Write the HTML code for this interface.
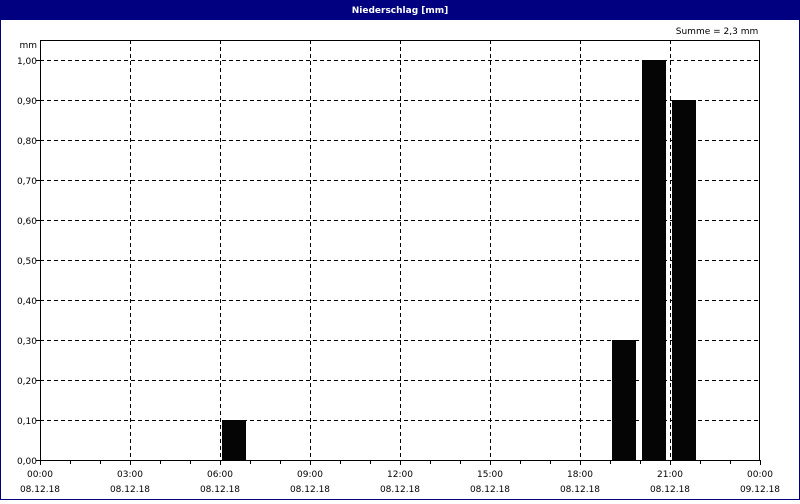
<!DOCTYPE html>
<html><head><style>
body{margin:0;width:800px;height:500px;overflow:hidden;background:#fff;font-family:"DejaVu Sans","Liberation Sans",sans-serif}
</style></head><body>
<svg width="800" height="500" xmlns="http://www.w3.org/2000/svg" font-family="DejaVu Sans, Liberation Sans, sans-serif" font-size="9">
<rect x="0" y="0" width="800" height="500" fill="#fff"/>
<rect x="0.5" y="0.5" width="799" height="499" fill="none" stroke="#000080"/>
<rect x="0" y="0" width="800" height="20" fill="#000080"/>
<text x="400" y="13" fill="#fff" font-weight="bold" text-anchor="middle">Niederschlag [mm]</text>
<text x="717" y="34" text-anchor="middle">Summe = 2,3 mm</text>
<text x="37" y="48" text-anchor="end">mm</text>
<g stroke="#000" stroke-dasharray="4,3" stroke-width="1">
<path d="M40 60.5H760M40 100.5H760M40 140.5H760M40 180.5H760M40 220.5H760M40 260.5H760M40 300.5H760M40 340.5H760M40 380.5H760M40 420.5H760"/>
<path d="M130.5 40V460M220.5 40V460M310.5 40V460M400.5 40V460M490.5 40V460M580.5 40V460M670.5 40V460"/>
</g>
<g fill="#050505">
<rect x="222" y="420" width="24" height="40"/>
<rect x="612" y="340" width="24" height="120"/>
<rect x="642" y="60" width="24" height="400"/>
<rect x="672" y="100" width="24" height="360"/>
</g>
<rect x="40.5" y="40.5" width="719" height="420" fill="none" stroke="#000"/>
<g stroke="#000">
<path d="M40.5 460V465M70.5 460V464M100.5 460V464M130.5 460V465M160.5 460V464M190.5 460V464M220.5 460V465M250.5 460V464M280.5 460V464M310.5 460V465M340.5 460V464M370.5 460V464M400.5 460V465M430.5 460V464M460.5 460V464M490.5 460V465M520.5 460V464M550.5 460V464M580.5 460V465M610.5 460V464M640.5 460V464M670.5 460V465M700.5 460V464M730.5 460V464M760.5 460V465"/>
<path d="M36 60.5H40M36 100.5H40M36 140.5H40M36 180.5H40M36 220.5H40M36 260.5H40M36 300.5H40M36 340.5H40M36 380.5H40M36 420.5H40M36 460.5H40"/>
</g>
<g text-anchor="end">
<text x="37" y="64">1,00</text><text x="37" y="104">0,90</text><text x="37" y="144">0,80</text><text x="37" y="184">0,70</text><text x="37" y="224">0,60</text><text x="37" y="264">0,50</text><text x="37" y="304">0,40</text><text x="37" y="344">0,30</text><text x="37" y="384">0,20</text><text x="37" y="424">0,10</text><text x="37" y="464">0,00</text>
</g>
<g text-anchor="middle">
<text x="40" y="477">00:00</text><text x="40" y="492">08.12.18</text>
<text x="130" y="477">03:00</text><text x="130" y="492">08.12.18</text>
<text x="220" y="477">06:00</text><text x="220" y="492">08.12.18</text>
<text x="310" y="477">09:00</text><text x="310" y="492">08.12.18</text>
<text x="400" y="477">12:00</text><text x="400" y="492">08.12.18</text>
<text x="490" y="477">15:00</text><text x="490" y="492">08.12.18</text>
<text x="580" y="477">18:00</text><text x="580" y="492">08.12.18</text>
<text x="670" y="477">21:00</text><text x="670" y="492">08.12.18</text>
<text x="760" y="477">00:00</text><text x="760" y="492">09.12.18</text>
</g>
</svg>
</body></html>
